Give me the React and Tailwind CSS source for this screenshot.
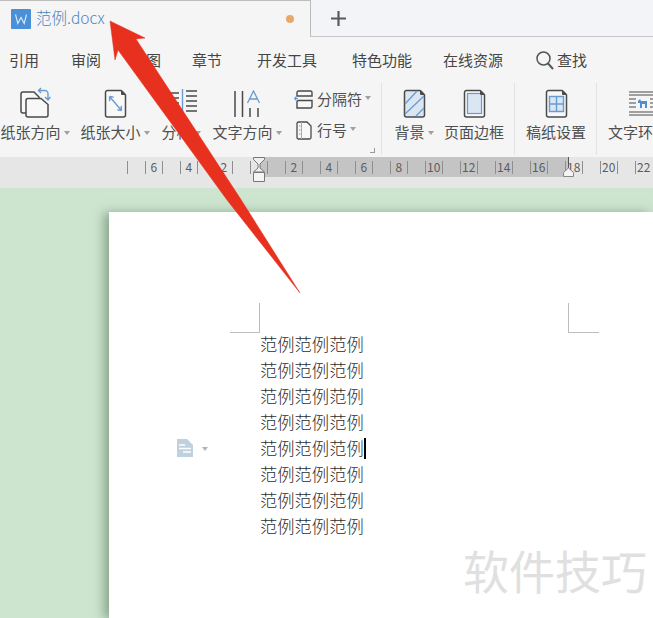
const ui = { fontFamily: '"Noto Sans CJK SC", "Liberation Sans", sans-serif' };

const DOC = "M1.5 3.5a2 2 0 0 1 2-2H17l4.5 4.5v20a2 2 0 0 1-2 2h-16a2 2 0 0 1-2-2Z";
const INK = "#4a4a4a";
const BLUE = "#6a9bd0";

function DocIcon({ children, fill = "#f8f8f8" }) {
  return (
    <svg width="23" height="29" viewBox="0 0 23 29" fill="none">
      <path d={DOC} fill={fill} stroke={INK} strokeWidth="1.5" />
      {children}
      <path d="M17 1.5h1.2l3.3 3.3V6H18a1 1 0 0 1-1-1Z" fill={INK} />
    </svg>
  );
}

const Caret = () => (
  <span className="inline-block ml-[3px] mb-[2px] align-middle w-0 h-0 border-x-[3.5px] border-x-transparent border-t-[4px] border-t-[#a0a0a0]" />
);

function BigTool({ label, caret, icon, className }) {
  return (
    <div className={`flex flex-col items-center shrink-0 ${className}`}>
      <div className="h-[29px] flex items-center justify-center">{icon}</div>
      <div className="mt-[3px] h-[22px] leading-[22px] text-[15px] text-[#4f4f4f] whitespace-nowrap">
        {label}
        {caret && <Caret />}
      </div>
    </div>
  );
}

const Sep = ({ className }) => <div className={`w-px h-[72px] bg-[#e2e2e2] shrink-0 -mt-[6px] ${className}`} />;

const OrientIcon = (
  <svg width="31" height="31" viewBox="0 0 31 31" fill="none" className="-mt-[2px]">
    <path d="M1 7a2 2 0 0 1 2-2h11l5 5v14a2 2 0 0 1-2 2H3a2 2 0 0 1-2-2Z" fill="#f8f8f8" stroke={INK} strokeWidth="1.5" />
    <path d="M6 13.5a2 2 0 0 1 2-2h13l7 6V28a2 2 0 0 1-2 2H8a2 2 0 0 1-2-2Z" fill="#f8f8f8" stroke={INK} strokeWidth="1.5" />
    <path d="M19 3.5h6a3 3 0 0 1 3 3v6M21 1l-2.5 2.5L21 6M25 10l3 3 2.500-3" stroke={BLUE} strokeWidth="1.4" />
  </svg>
);

const SizeIcon = (
  <DocIcon>
    <path d="M5.500 7.500 17.500 21.500M5.500 7.500l.2 4.600M5.500 7.500l4.300.6M17.500 21.500l-.3-4.600M17.500 21.500l-4.300-.6" stroke={BLUE} strokeWidth="1.4" />
  </DocIcon>
);

const ColumnIcon = (
  <svg width="32" height="25" viewBox="0 0 32 25" fill="none" className="-mt-[4px]">
    <path d="M1 4h13M1 9h13M1 14h13M1 19h13M1 24h13M21 2h11M21 7h11M21 12h11M21 17h11M21 22h11" stroke={INK} strokeWidth="1.3" />
    <path d="M17.500 0v25" stroke={BLUE} strokeWidth="1.4" />
  </svg>
);

const TextDirIcon = (
  <svg width="27" height="28" viewBox="0 0 27 28" fill="none">
    <path d="M1 1v26M8.500 1v26M16 18v9M24 18v9" stroke={INK} strokeWidth="1.5" />
    <path d="M13.500 13 19.500 1l6 12M15.500 9h8" stroke={BLUE} strokeWidth="1.3" />
  </svg>
);

const BreakIcon = (
  <svg width="19" height="19" viewBox="0 0 19 19" fill="none">
    <path d="M3 6V2.500a1.500 1.500 0 0 1 1.500-1.500h12A1.500 1.500 0 0 1 18 2.500V6ZM3 18v-6a1.500 1.500 0 0 1 1.500-1.500H18V16.500a1.500 1.500 0 0 1-1.500 1.500Z" stroke={INK} strokeWidth="1.4" fill="#f8f8f8" />
    <path d="M0 8.500h4M2.500 6.500l-2 2 2 2" stroke={BLUE} strokeWidth="1.2" />
  </svg>
);

const LineNoIcon = (
  <svg width="16" height="19" viewBox="0 0 16 19" fill="none">
    <path d="M1 2.500A1.500 1.500 0 0 1 2.500 1H11l4 4v11.500a1.500 1.500 0 0 1-1.500 1.500h-11A1.500 1.500 0 0 1 1 16.500Z" fill="#f8f8f8" stroke={INK} strokeWidth="1.3" />
    <path d="M5.500 1v17" stroke="#aaa" strokeWidth="1" />
    <path d="M3 5h1.500M3 9h1.500M3 13h1.500" stroke={BLUE} strokeWidth="1.2" />
  </svg>
);

const BgIcon = (
  <DocIcon fill="#dbe6f3">
    <path d="M2 15 14 2M2 25 21 7M13 27l8-8" stroke={BLUE} strokeWidth="1.3" />
  </DocIcon>
);

const BorderIcon = (
  <DocIcon>
    <rect x="4.500" y="4.500" width="14" height="20" fill="#dbe6f3" stroke={BLUE} strokeWidth="1.2" />
  </DocIcon>
);

const GridIcon = (
  <DocIcon>
    <path d="M4.500 7.500h14v15h-14ZM4.500 15h14M11.500 7.500v15" fill="#dbe6f3" stroke={BLUE} strokeWidth="1.4" />
  </DocIcon>
);

const WrapIcon = (
  <svg width="28" height="25" viewBox="0 0 28 25" fill="none">
    <path d="M0 1h28M0 4h28M0 21h28M0 24h28M0 8h7M0 12h7M0 16h7M21 8h7M21 12h7M21 16h7" stroke={INK} strokeWidth="1.2" />
    <path d="M9 10l2-2 1 2h6v7h-2v-4h-3v4h-2v-5H9Z" fill="#4d8fd0" />
  </svg>
);

const Menu = ({ m, children }) => (
  <span className={`text-[15px] text-[#454545] whitespace-nowrap ${m}`}>{children}</span>
);

function RulerCell({ n }) {
  return (
    <div className="w-[17.5px] h-[13px] shrink-0 border-l border-[#8e8e8e] flex items-center justify-center text-[12px] leading-none text-[#5c5c5c]">
      {n}
    </div>
  );
}

const rulerCells = [
  "", "6", "", "4", "", "2", "", "", "", "2", "", "4", "", "6", "", "8", "", "10", "", "12", "", "14", "", "16", "", "18", "", "20", "", "22",
];

const docLines = [0, 1, 2, 3, 4, 5, 6, 7];

export default function App() {
  return (
    <div style={ui} className="relative w-[653px] h-[618px] overflow-hidden flex flex-col bg-[#cde5ce]">
      {/* title bar */}
      <div className="h-[37px] shrink-0 flex bg-[#f2f4f7]">
        <div className="w-[311px] h-[37px] bg-[#f5f5f5] border-t border-r border-[#bcbcbc] flex items-center pl-[11px] pr-[16px]">
          <div className="w-[20px] h-[20px] bg-[#4a90d9] rounded-[1px] flex items-center justify-center">
            <svg width="14" height="12" viewBox="0 0 14 12" fill="none">
              <path d="M1.500 1.500 3.800 10.500 7 4.500 10.200 10.500 12.500 1.500" stroke="#dcebfa" strokeWidth="1.1" />
            </svg>
          </div>
          <span className="ml-[5px] text-[15.5px] font-light text-[#4a86c0] leading-none -mt-[2px]">范例.docx</span>
          <span className="ml-auto w-[8px] h-[8px] rounded-full bg-[#e8a76c]" />
        </div>
        <div className="flex-1 border-b border-[#c9c9c9] pl-[20px] flex items-center">
          <svg width="15" height="15" viewBox="0 0 15 15">
            <path d="M7.500 0v15M0 7.500h15" stroke="#5a5a5a" strokeWidth="2.2" />
          </svg>
        </div>
      </div>

      {/* tabs */}
      <div className="h-[43px] shrink-0 bg-[#f5f5f5] flex items-center pl-[9px] pt-[3px]">
        <Menu>引用</Menu>
        <Menu m="ml-[32px]">审阅</Menu>
        <Menu m="ml-[30px]">视图</Menu>
        <Menu m="ml-[31px]">章节</Menu>
        <Menu m="ml-[35px]">开发工具</Menu>
        <Menu m="ml-[35px]">特色功能</Menu>
        <Menu m="ml-[31px]">在线资源</Menu>
        <svg width="20" height="20" viewBox="0 0 20 20" fill="none" className="ml-[32px]">
          <circle cx="8.500" cy="8.500" r="6.500" stroke="#555" strokeWidth="1.5" />
          <path d="M13 13.500 18 19" stroke="#555" strokeWidth="2" />
        </svg>
        <Menu m="ml-[2px] text-[#777]">查找</Menu>
      </div>

      {/* ribbon */}
      <div className="h-[77px] shrink-0 bg-[#f5f5f5] flex pt-[9px] overflow-hidden">
        <BigTool className="w-[72px] -ml-[1px]" label="纸张方向" caret icon={OrientIcon} />
        <BigTool className="w-[72px] ml-[8px]" label="纸张大小" caret icon={SizeIcon} />
        <BigTool className="w-[42px] ml-[9px]" label="分栏" caret icon={ColumnIcon} />
        <BigTool className="w-[72px] ml-[9px]" label="文字方向" caret icon={TextDirIcon} />
        <div className="relative w-[87px] ml-[11px] shrink-0 flex flex-col gap-[11px] text-[15px] text-[#4f4f4f] leading-[20px]">
          <div className="flex items-center h-[20px]">
            <span className="w-[23px]">{BreakIcon}</span>
            <span>分隔符</span>
            <Caret />
          </div>
          <div className="flex items-center h-[20px] pl-[2px]">
            <span className="w-[21px]">{LineNoIcon}</span>
            <span>行号</span>
            <Caret />
          </div>
          <div className="absolute left-[76px] top-[59px] w-[5px] h-[5px] border-r border-b border-[#9a9a9a]" />
        </div>
        <Sep />
        <BigTool className="w-[42px] ml-[11px]" label="背景" caret icon={BgIcon} />
        <BigTool className="w-[60px] ml-[9px]" label="页面边框" icon={BorderIcon} />
        <Sep className="ml-[10px]" />
        <BigTool className="w-[60px] ml-[11px]" label="稿纸设置" icon={GridIcon} />
        <Sep className="ml-[10px]" />
        <div className="ml-[11px] flex flex-col shrink-0">
          <div className="h-[29px] flex items-center pl-[21px]">{WrapIcon}</div>
          <div className="mt-[3px] h-[22px] leading-[22px] text-[15px] text-[#4f4f4f] whitespace-nowrap">文字环绕</div>
        </div>
      </div>

      {/* ruler */}
      <div className="relative h-[20px] shrink-0 flex items-center pl-[127px] overflow-hidden bg-[linear-gradient(to_right,#e6e6e6_258px,#c4c4c4_258px,#c4c4c4_568px,#e6e6e6_568px)]">
        {rulerCells.map((n, i) => (
          <RulerCell key={i} n={n} />
        ))}
      </div>
      <div className="h-[11px] shrink-0 bg-[#e6e6e6]" />

      {/* ruler markers lying over the ruler */}
      <svg width="14" height="27" viewBox="0 0 14 27" className="absolute left-[252px] top-[156px]" fill="none">
        <path d="M1.500 1.500h11v2L8 8v4l4.500 4h-11L6 12V8L1.500 3.500Z" fill="#eee" stroke="#777" />
        <path d="M1.500 16.500h11v9h-11Z" fill="#f4f4f4" stroke="#777" />
      </svg>
      <svg width="14" height="21" viewBox="0 0 14 21" className="absolute left-[562px] top-[157px]" fill="none">
        <path d="M6.500 0v11" stroke="#555" />
        <path d="M1.500 19.500v-4L6.500 11l5 4.500v4Z" fill="#f4f4f4" stroke="#888" />
      </svg>

      {/* document area */}
      <div className="flex-1 min-h-0 pt-[24px] pl-[109px]">
        <div className="h-full bg-white shadow-[-5px_1px_10px_rgba(70,100,75,0.5)] pt-[91px]">
          <div className="flex pl-[121px]">
            <div className="w-[30px] h-[30px] border-r border-b border-[#bdbdbd]" />
            <div className="w-[308px]" />
            <div className="w-[31px] h-[30px] border-l border-b border-[#bdbdbd]" />
          </div>
          <div className="pl-[151px] -mt-[2px] text-[17.3px] leading-[26px] font-light text-[#2e2e2e]">
            {docLines.map((i) => (
              <div key={i} className="relative h-[26px] flex items-center">
                <span>范例范例范例</span>
                {i === 4 && (
                  <>
                    <span className="w-[2px] h-[21px] bg-black" />
                    <svg width="16" height="18" viewBox="0 0 16 18" className="absolute left-[-83px] top-[4px]">
                      <path d="M0 0h10l6 6v12H0Z" fill="#bfd0df" />
                      <path d="M2 6h6M2 9.500h12M6 13h8" stroke="#fff" strokeWidth="1.3" />
                    </svg>
                    <span className="absolute left-[-58px] top-[12px] w-0 h-0 border-x-[3.5px] border-x-transparent border-t-[4px] border-t-[#b5b5b5]" />
                  </>
                )}
              </div>
            ))}
          </div>
        </div>
      </div>

      {/* watermark */}
      <div className="absolute left-[463px] top-[535px] text-[46px] leading-[68px] text-[#e0e0e0] whitespace-nowrap">软件技巧</div>

      {/* annotation arrow */}
      <svg width="653" height="618" viewBox="0 0 653 618" className="absolute left-0 top-0 pointer-events-none">
        <polygon points="110,21 145,38 136,39 240,198 300,293 227,200 118,50 115,60" fill="#e8301f" stroke="#e8301f" strokeWidth="0.5" strokeLinejoin="round" />
      </svg>
    </div>
  );
}
